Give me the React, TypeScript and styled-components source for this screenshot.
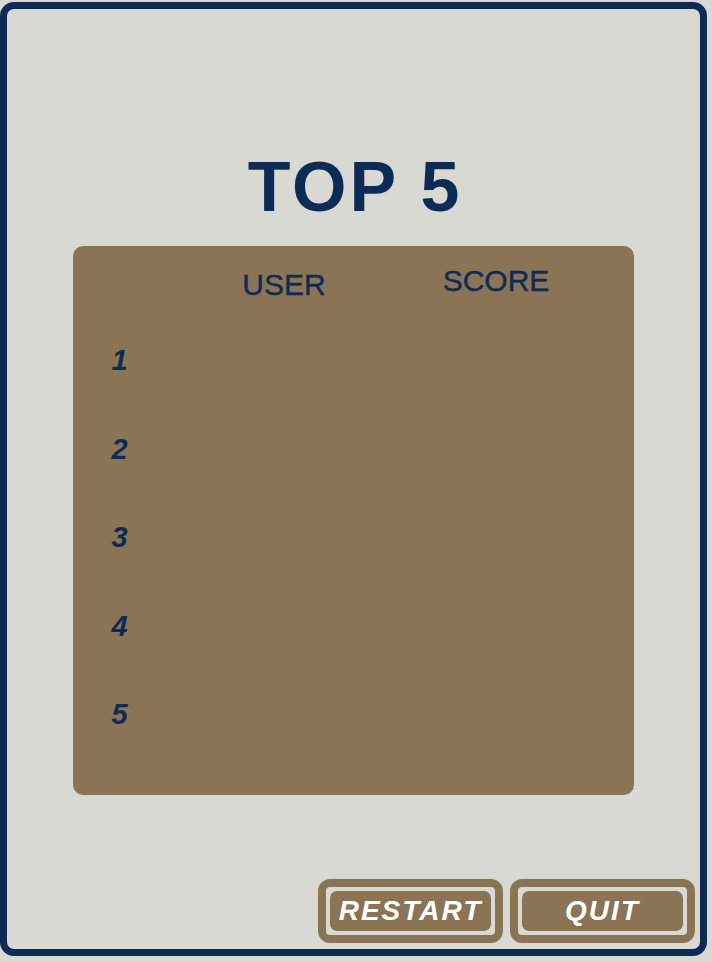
import styled, { createGlobalStyle } from "styled-components";

const NAVY = "#0d2b55";
const BROWN = "#8a7455";
const PAPER = "#d9d9d4";

const GlobalStyle = createGlobalStyle`
  html, body {
    margin: 0;
    padding: 0;
    background: ${PAPER};
  }
  * {
    box-sizing: border-box;
  }
`;

const rows = [1, 2, 3, 4, 5];

export default function App() {
  return (
    <>
      <GlobalStyle />
      <Frame>
        <Title>TOP 5</Title>

        <Board>
          <HeaderRow>
            <span />
            <HeadCell $drop={4}>USER</HeadCell>
            <HeadCell $drop={0}>SCORE</HeadCell>
          </HeaderRow>

          {rows.map((n) => (
            <Row key={n}>
              <Rank>{n}</Rank>
              <span />
              <span />
            </Row>
          ))}
        </Board>

        <Actions>
          <Button>
            <span>RESTART</span>
          </Button>
          <Button>
            <span>QUIT</span>
          </Button>
        </Actions>
      </Frame>
    </>
  );
}

const Frame = styled.div`
  margin-top: 2px;
  width: 707px;
  height: 954px;
  border: 7px solid ${NAVY};
  border-radius: 14px;
  background: ${PAPER};
  display: flex;
  flex-direction: column;
  align-items: center;
  padding: 143px 5px 6px 0;
`;

const Title = styled.h1`
  margin: 0;
  font-family: "Liberation Sans", Arial, sans-serif;
  font-weight: bold;
  font-size: 70px;
  line-height: 1;
  letter-spacing: 3px;
  color: ${NAVY};
  padding-left: 8px;
`;

const Board = styled.div`
  margin-top: 24px;
  width: 561px;
  height: 549px;
  background: ${BROWN};
  border-radius: 10px;
  padding-top: 20px;
  margin-left: 4px;
`;

const grid = `
  display: grid;
  grid-template-columns: 94px 235px 189px;
  justify-items: center;
  align-items: start;
`;

const HeaderRow = styled.div`
  ${grid};
  height: 80px;
`;

const HeadCell = styled.div<{ $drop: number }>`
  margin-top: ${(p) => p.$drop}px;
  font-family: "Liberation Sans", Arial, sans-serif;
  font-size: 30px;
  line-height: 1;
  color: ${NAVY};
  -webkit-text-stroke: 0.4px ${NAVY};
`;

const Row = styled.div`
  ${grid};
  height: 88.5px;
`;

const Rank = styled.div`
  font-family: "Liberation Sans", Arial, sans-serif;
  font-weight: bold;
  font-style: italic;
  font-size: 29px;
  line-height: 1;
  color: ${NAVY};
`;

const Actions = styled.div`
  margin-top: auto;
  align-self: flex-end;
  display: flex;
  gap: 7px;
`;

const Button = styled.button`
  width: 185px;
  height: 64px;
  padding: 4px;
  border: 8px solid ${BROWN};
  border-radius: 12px;
  background: transparent;
  cursor: pointer;

  span {
    display: flex;
    align-items: center;
    justify-content: center;
    height: 100%;
    background: ${BROWN};
    border-radius: 7px;
    font-family: "Liberation Sans", Arial, sans-serif;
    font-weight: bold;
    font-style: italic;
    font-size: 28px;
    letter-spacing: 2px;
    color: #fff;
  }
`;
